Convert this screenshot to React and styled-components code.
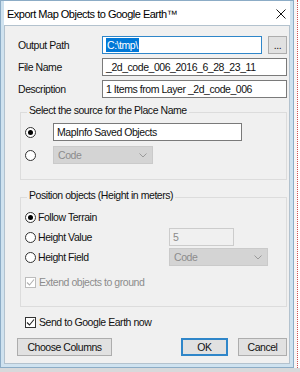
import React from 'react';
import styled, { createGlobalStyle } from 'styled-components';

const GlobalStyle = createGlobalStyle`
  body {
    margin: 0;
    background: #fff;
    font-family: "Liberation Sans", Arial, sans-serif;
  }
`;

const Page = styled.div`
  width: 300px;
  height: 372px;
  display: flex;
  flex-direction: column;
  overflow: hidden;
`;

const TopArea = styled.div`
  display: flex;
  height: 368px;
`;

const BottomStrip = styled.div`
  height: 4px;
  background: #d7d9db;
`;

const Margin = styled.div`
  flex: 1;
  background: #fbf5f5;
  border-right: 1px dotted #d05050;
  margin-right: 2px;
`;

const Window = styled.div`
  width: 294px;
  box-sizing: border-box;
  border: 1px solid #8cacc6;
  background: #cfe2ef;
  padding: 0 3px 3px;
  display: flex;
  flex-direction: column;
`;

const TitleBar = styled.div`
  height: 24px;
  background: #fff;
  display: flex;
  align-items: center;
  justify-content: space-between;
  padding: 2px 4px 0 3px;
  box-sizing: border-box;
  font-size: 11px;
  letter-spacing: -0.5px;
  color: #000;
`;

const Client = styled.div`
  flex: 1;
  background: #f0f0f0;
  border: 1px solid #b3c2ce;
  padding: 10px 2px 0 12px;
  display: flex;
  flex-direction: column;
  font-size: 10.5px;
  letter-spacing: -0.45px;
  color: #111;
`;

const Row = styled.div`
  display: flex;
  align-items: center;
  height: 18px;
  margin-top: ${p => p.$mt || 0}px;
`;

const Label = styled.span`
  width: 84px;
  padding-left: 1px;
  flex-shrink: 0;
`;

const TextBox = styled.div`
  height: ${p => p.$h || 18}px;
  box-sizing: border-box;
  width: ${p => (p.$w ? `${p.$w}px` : 'auto')};
  flex: ${p => (p.$w ? 'none' : 1)};
  border: 1px solid ${p => (p.$focus ? '#2f86c9' : p.$disabled ? '#cccccc' : '#7a7a7a')};
  background: ${p => (p.$disabled ? '#f0f0f0' : '#fff')};
  color: ${p => (p.$disabled ? '#8a8a8a' : '#111')};
  display: flex;
  align-items: center;
  padding: 0 3px;
  white-space: nowrap;
  overflow: hidden;
`;

const Selected = styled.span`
  background: #0078d7;
  color: #fff;
  padding: 1px 1px;
`;

const Button = styled.div`
  height: ${p => p.$h || 18}px;
  width: ${p => p.$w}px;
  box-sizing: border-box;
  border: ${p => (p.$default ? '2px solid #2f86c9' : '1px solid #adadad')};
  background: #e1e1e1;
  display: flex;
  align-items: center;
  justify-content: center;
  flex-shrink: 0;
`;

const Group = styled.fieldset`
  margin: ${p => p.$mt}px 0 0 3px;
  border: 1px solid #dcdcdc;
  padding: 3px 0 ${p => p.$pb}px 4px;
  min-width: 0;
  display: flex;
  flex-direction: column;
  gap: ${p => p.$gap}px;
`;

const Legend = styled.legend`
  padding: 0 2px 4px;
  margin-left: 2px;
  line-height: 12px;
`;

const RadioRow = styled.div`
  display: grid;
  grid-template-columns: ${p => p.$cols};
  align-items: center;
  height: 18px;
`;

const RadioLabel = styled.span`
  display: flex;
  align-items: center;
  gap: 2px;
`;

const RadioCircle = styled.span`
  width: 11px;
  height: 11px;
  box-sizing: border-box;
  border-radius: 50%;
  border: 1px solid #333;
  background: #fff;
  display: inline-flex;
  align-items: center;
  justify-content: center;
  &::after {
    content: '';
    width: 5px;
    height: 5px;
    border-radius: 50%;
    background: ${p => (p.$on ? '#000' : 'transparent')};
  }
`;

const CheckBox = styled.span`
  width: 11px;
  height: 11px;
  box-sizing: border-box;
  border: 1px solid ${p => (p.$disabled ? '#bcbcbc' : '#333')};
  background: #fff;
  display: inline-flex;
  align-items: center;
  justify-content: center;
  flex-shrink: 0;
`;

const Combo = styled.div`
  height: 18px;
  width: ${p => p.$w}px;
  box-sizing: border-box;
  background: #d4d4d4;
  border: 1px solid #cacaca;
  color: #8c8c8c;
  display: flex;
  align-items: center;
  justify-content: space-between;
  padding: 0 5px 0 4px;
`;

const CheckRow = styled.div`
  display: flex;
  align-items: center;
  gap: 3px;
  height: 16px;
  margin-top: ${p => p.$mt || 0}px;
  padding-left: ${p => p.$pl || 0}px;
  color: ${p => (p.$disabled ? '#8c8c8c' : '#111')};
`;

const ButtonBar = styled.div`
  display: flex;
  align-items: center;
  margin-top: 8px;
  gap: 10px;
`;

const Spacer = styled.div`
  flex: 1;
`;

function Check({ color }) {
  return (
    <svg width="9" height="9" viewBox="0 0 9 9">
      <path d="M1 4.5 L3.5 7 L8 1.5" fill="none" stroke={color} strokeWidth="1.1" />
    </svg>
  );
}

function Chevron() {
  return (
    <svg width="8" height="5" viewBox="0 0 8 5">
      <path d="M0.5 0.5 L4 4 L7.5 0.5" fill="none" stroke="#9a9a9a" strokeWidth="1" />
    </svg>
  );
}

function Radio({ on, children }) {
  return (
    <RadioLabel>
      <RadioCircle $on={on} />
      {children}
    </RadioLabel>
  );
}

export default function App() {
  return (
    <>
      <GlobalStyle />
      <Page>
        <TopArea>
          <Window>
            <TitleBar>
              <span>Export Map Objects to Google Earth™</span>
              <svg width="10" height="10" viewBox="0 0 10 10">
                <path d="M0.5 0.5 L9.5 9.5 M9.5 0.5 L0.5 9.5" stroke="#111" strokeWidth="1" />
              </svg>
            </TitleBar>
            <Client>
              <Row>
                <Label>Output Path</Label>
                <TextBox $w={160} $focus>
                  <Selected>C:\tmp\</Selected>
                </TextBox>
                <span style={{ width: 6 }} />
                <Button $w={19}>...</Button>
              </Row>
              <Row $mt={4}>
                <Label>File Name</Label>
                <TextBox>_2d_code_006_2016_6_28_23_11</TextBox>
              </Row>
              <Row $mt={4}>
                <Label>Description</Label>
                <TextBox>1 Items from Layer _2d_code_006</TextBox>
              </Row>

              <Group $mt={6} $pb={15} $gap={5}>
                <Legend>Select the source for the Place Name</Legend>
                <RadioRow $cols="28px auto">
                  <RadioCircle $on />
                  <TextBox $w={189}>MapInfo Saved Objects</TextBox>
                </RadioRow>
                <RadioRow $cols="28px auto">
                  <RadioCircle />
                  <Combo $w={100}>
                    <span>Code</span>
                    <Chevron />
                  </Combo>
                </RadioRow>
              </Group>

              <Group $mt={9} $pb={16} $gap={2}>
                <Legend>Position objects (Height in meters)</Legend>
                <RadioRow $cols="144px auto">
                  <Radio on>Follow Terrain</Radio>
                </RadioRow>
                <RadioRow $cols="144px auto">
                  <Radio>Height Value</Radio>
                  <TextBox $w={65} $disabled>5</TextBox>
                </RadioRow>
                <RadioRow $cols="144px auto">
                  <Radio>Height Field</Radio>
                  <Combo $w={99}>
                    <span>Code</span>
                    <Chevron />
                  </Combo>
                </RadioRow>
                <CheckRow $mt={6} $disabled>
                  <CheckBox $disabled>
                    <Check color="#b0b0b0" />
                  </CheckBox>
                  Extend objects to ground
                </CheckRow>
              </Group>

              <CheckRow $mt={7} $pl={8}>
                <CheckBox>
                  <Check color="#222" />
                </CheckBox>
                Send to Google Earth now
              </CheckRow>

              <ButtonBar>
                <Button $w={95}>Choose Columns</Button>
                <Spacer />
                <Button $w={47} $default>OK</Button>
                <Button $w={49}>Cancel</Button>
              </ButtonBar>
            </Client>
          </Window>
          <Margin />
        </TopArea>
        <BottomStrip />
      </Page>
    </>
  );
}
